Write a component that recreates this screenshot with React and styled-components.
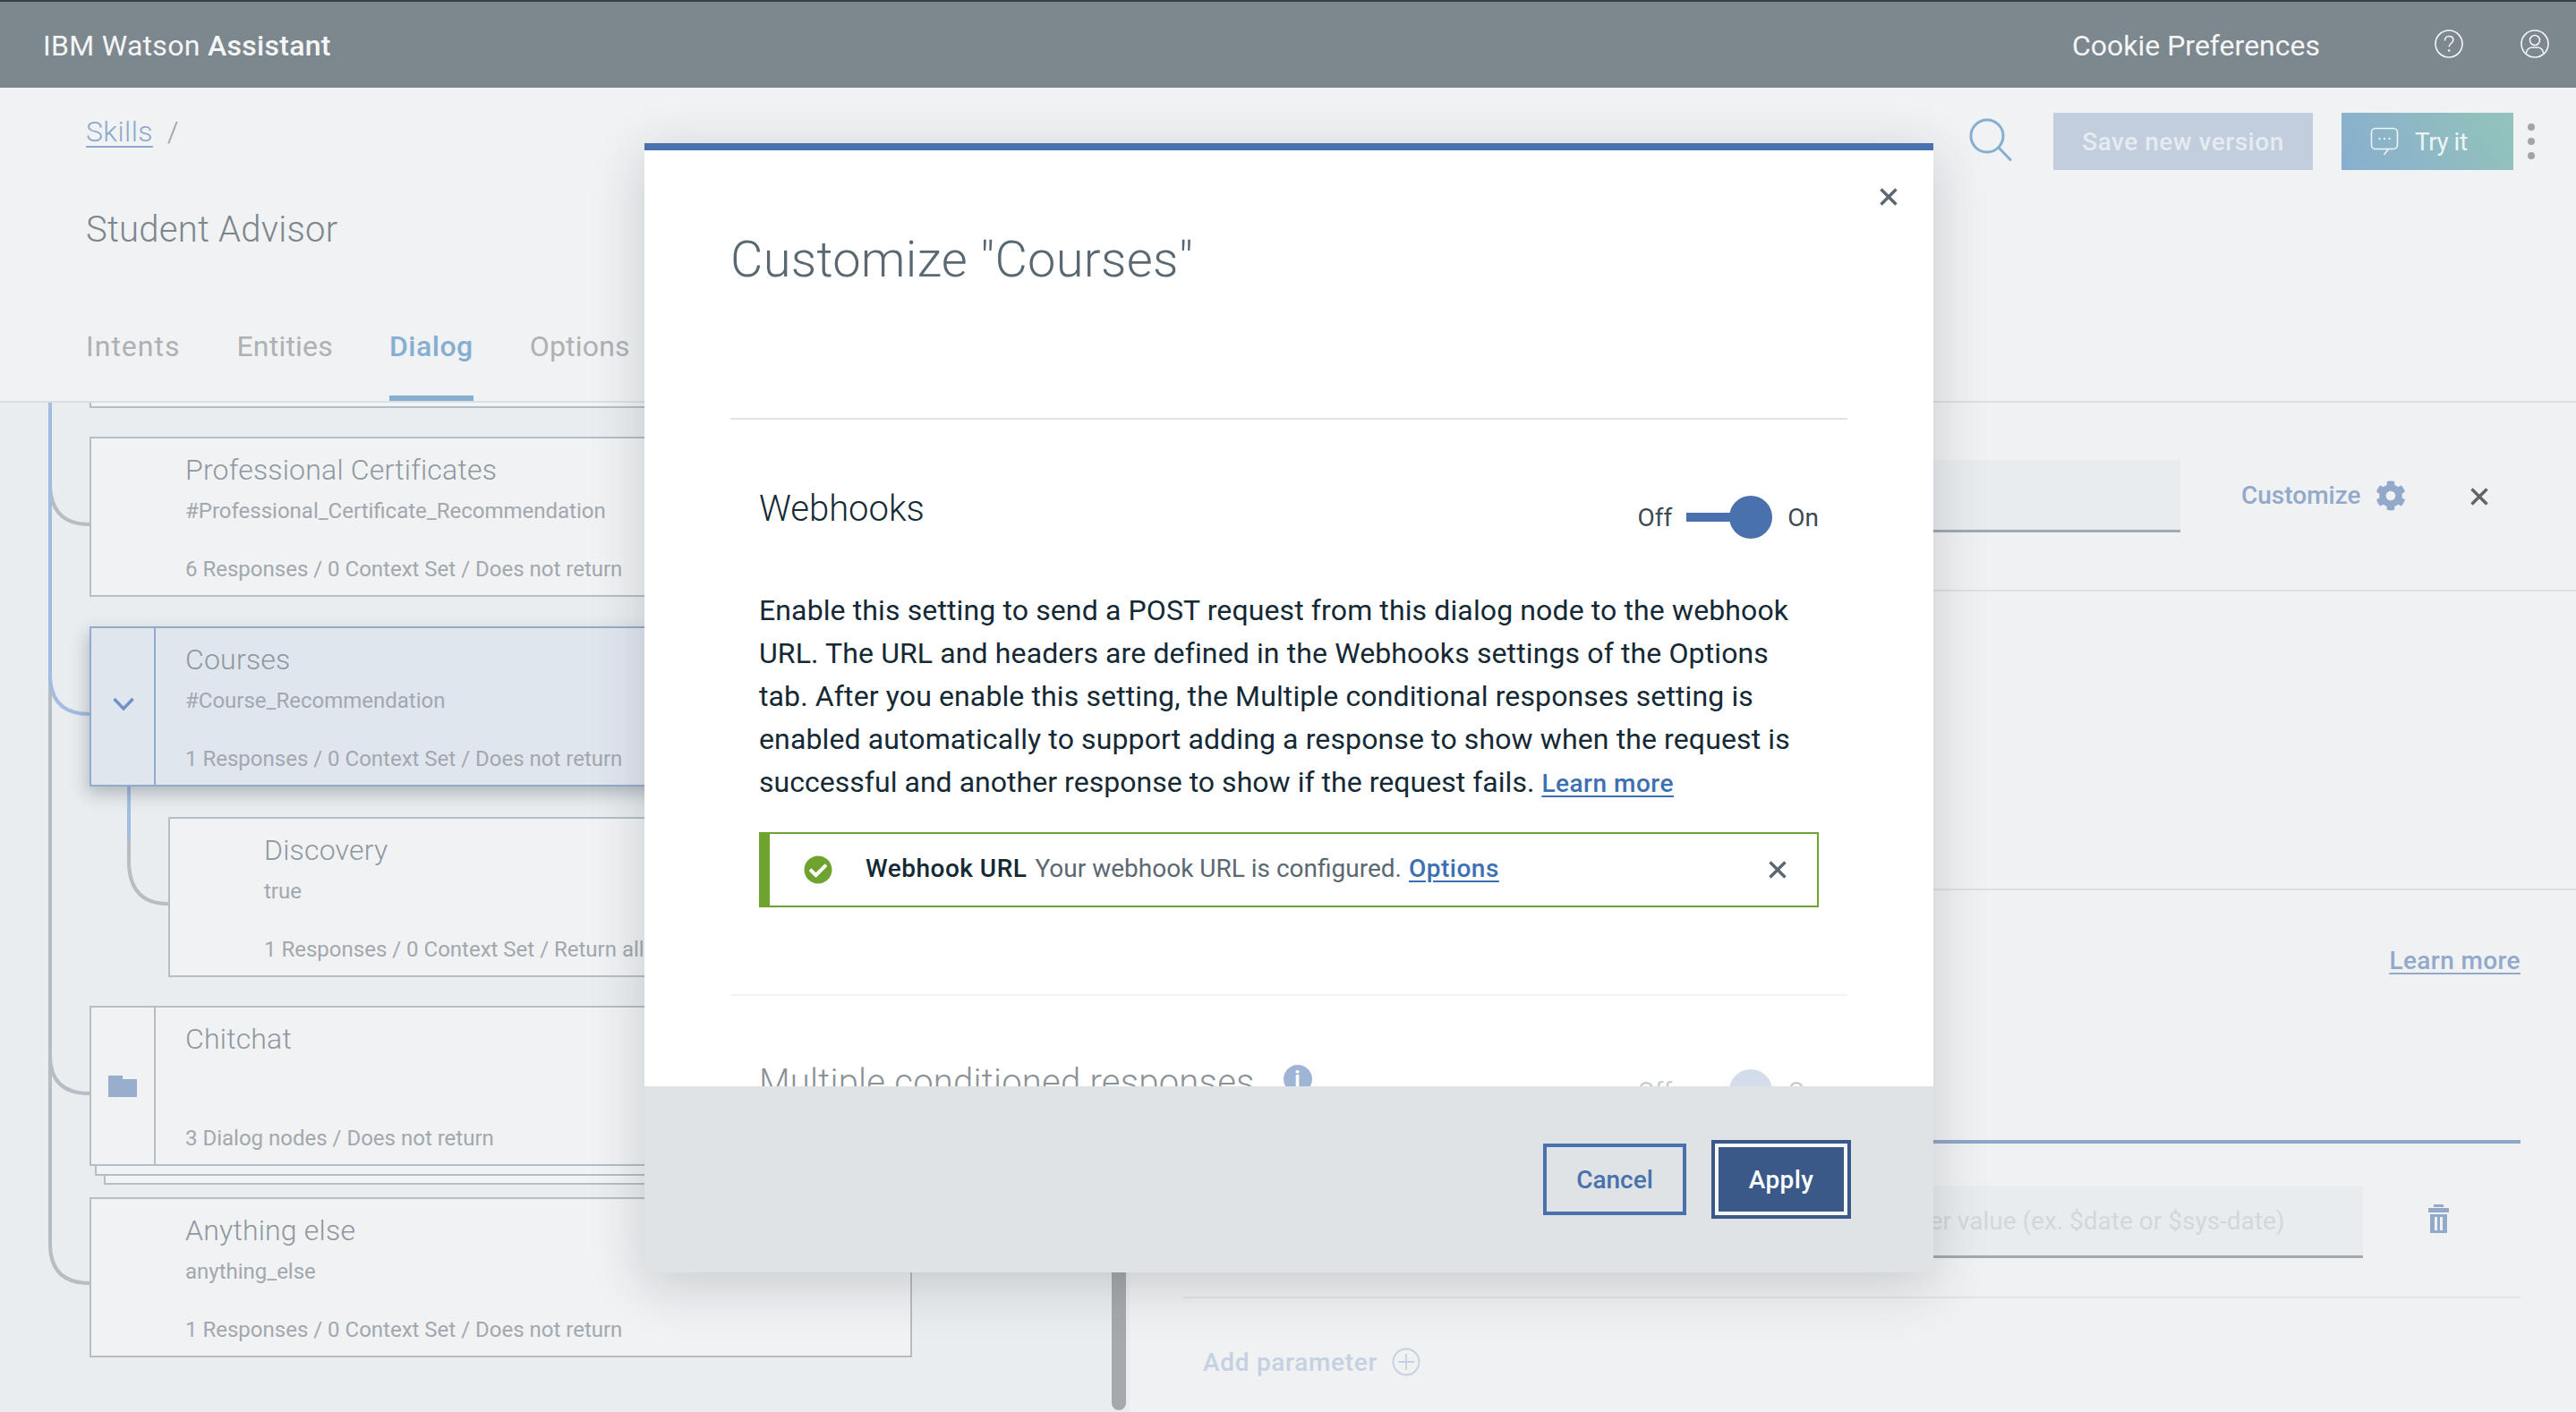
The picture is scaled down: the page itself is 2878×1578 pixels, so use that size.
import React from 'react';
import styled, { createGlobalStyle } from 'styled-components';
import { FaCog, FaCheckCircle } from 'react-icons/fa';

const FONT = `Roboto, "Noto Sans", Arial, sans-serif`;

const GlobalStyle = createGlobalStyle`
  html, body {
    margin: 0;
    padding: 0;
    background: #f0f2f4;
    font-family: ${FONT};
  }
  * {
    box-sizing: border-box;
  }
`;

const Page = styled.div`
  position: relative;
  width: 2878px;
  height: 1578px;
  overflow: hidden;
  background: #f0f2f4;
  display: flex;
  flex-direction: column;
`;

const TopBar = styled.header`
  height: 98px;
  flex-shrink: 0;
  background: #7d888e;
  border-top: 2px solid #3a4044;
  display: flex;
  align-items: center;
  justify-content: space-between;
  padding: 0 30px 2px 48px;
  color: #f4f6f7;
`;

const Brand = styled.div`
  font-size: 32px;
  letter-spacing: 0.3px;
  padding-top: 3px;
  strong {
    font-weight: 500;
  }
`;

const TopRight = styled.div`
  display: flex;
  align-items: center;
`;

const CookieLink = styled.span`
  font-size: 32px;
  margin-right: 128px;
  padding-top: 3px;
`;

const TopIcon = styled.svg`
  width: 32px;
  height: 32px;
  margin-left: ${(p) => p.$gap || 0}px;
  fill: none;
  stroke: #f4f6f7;
  stroke-width: 1.6;
`;

const SkillHeader = styled.section`
  height: 352px;
  flex-shrink: 0;
  display: flex;
  justify-content: space-between;
  border-bottom: 2px solid #dcdfe2;
  padding-left: 96px;
`;

const HeaderLeft = styled.div`
  display: flex;
  flex-direction: column;
`;

const Breadcrumb = styled.div`
  margin-top: 30px;
  height: 40px;
  display: flex;
  align-items: center;
  gap: 16px;
  font-size: 32px;
  font-weight: 300;
  letter-spacing: 0.4px;
  color: #9aa0a5;
  a {
    color: #8fa8cc;
    text-decoration: underline;
    text-underline-offset: 5px;
    text-decoration-thickness: 2px;
  }
`;

const SkillTitle = styled.h1`
  margin: 63px 0 0;
  height: 56px;
  line-height: 56px;
  font-size: 40px;
  font-weight: 300;
  letter-spacing: 0.25px;
  color: #7d868d;
`;

const Tabs = styled.nav`
  margin-top: 78px;
  display: flex;
  gap: 63px;
`;

const Tab = styled.div`
  height: 85px;
  line-height: 48px;
  font-size: 32px;
  letter-spacing: ${(p) => p.$spacing}px;
  font-weight: ${(p) => (p.$active ? 500 : 400)};
  color: ${(p) => (p.$active ? '#86aed1' : '#adb1b4')};
  border-bottom: 6px solid ${(p) => (p.$active ? '#86aed1' : 'transparent')};
`;

const HeaderActions = styled.div`
  display: flex;
  align-items: flex-start;
  padding: 28px 46px 0 0;
`;

const SearchIcon = styled.svg`
  width: 48px;
  height: 48px;
  margin: 6px 46px 0 0;
  fill: none;
  stroke: #86aed1;
  stroke-width: 3;
  stroke-linecap: round;
`;

const SaveButton = styled.div`
  width: 290px;
  height: 64px;
  background: #c2cede;
  color: #e6ebf1;
  font-size: 28px;
  font-weight: 500;
  letter-spacing: 0.5px;
  display: flex;
  align-items: center;
  justify-content: center;
  margin-right: 32px;
`;

const TryButton = styled.div`
  width: 192px;
  height: 64px;
  background: linear-gradient(60deg, #88aecf 0%, #93c4ba 100%);
  color: #eef3f5;
  font-size: 28px;
  letter-spacing: -0.5px;
  display: flex;
  align-items: center;
  padding-left: 32px;
  gap: 18px;
  margin-right: 16px;
  svg {
    width: 32px;
    height: 32px;
    fill: none;
    stroke: #eef3f5;
    stroke-width: 1.6;
  }
`;

const KebabDots = styled.div`
  height: 64px;
  display: flex;
  flex-direction: column;
  justify-content: center;
  gap: 8px;
  span {
    width: 8px;
    height: 8px;
    border-radius: 50%;
    background: #a0a5a9;
  }
`;

const Workspace = styled.main`
  flex: 1;
  display: flex;
  min-height: 0;
`;

const TreePane = styled.div`
  position: relative;
  width: 1262px;
  flex-shrink: 0;
  background: #e9edf0;
  padding-left: 100px;
  display: flex;
  flex-direction: column;
`;

const TreeLines = styled.svg`
  position: absolute;
  left: 0;
  top: 0;
  width: 200px;
  height: 1128px;
  fill: none;
  stroke-width: 4px;
`;

const Splitter = styled.div`
  position: absolute;
  left: 1242px;
  top: 0;
  bottom: 2px;
  width: 16px;
  background: #a5a9ac;
  border-radius: 0 0 8px 8px;
`;

const NodeStub = styled.div`
  width: 919px;
  height: 6px;
  border: 2px solid #b6bdc3;
  border-top: 0;
  background: #f0f2f4;
  margin-bottom: 32px;
`;

const Node = styled.div`
  position: relative;
  width: ${(p) => (p.$child ? 831 : 919)}px;
  margin-left: ${(p) => (p.$child ? 88 : 0)}px;
  margin-bottom: ${(p) => p.$gap ?? 33}px;
  height: 179px;
  display: flex;
  background: ${(p) => (p.$active ? '#e0e6ee' : '#f0f2f4')};
  border: 2px solid ${(p) => (p.$active ? '#93aac9' : '#b6bdc3')};
  box-shadow: ${(p) => (p.$active ? '-2px 8px 18px rgba(60, 70, 85, 0.32)' : 'none')};
`;

const NodeIcon = styled.div`
  width: 72px;
  flex-shrink: 0;
  display: flex;
  align-items: center;
  justify-content: center;
  border-right: 2px solid ${(p) => p.$line || 'transparent'};
`;

const Chevron = styled.svg`
  width: 24px;
  height: 16px;
  margin: -6px 0 0 2px;
  fill: none;
  stroke: #6f93c4;
  stroke-width: 3.5;
`;

const FolderIcon = styled.svg`
  width: 32px;
  height: 24px;
  fill: #98aecd;
`;

const NodeBody = styled.div`
  flex: 1;
  min-width: 0;
  display: flex;
  flex-direction: column;
  padding: 13px 0 11px 33px;
  white-space: nowrap;
  overflow: hidden;
`;

const NodeTitle = styled.div`
  font-size: 32px;
  font-weight: 300;
  letter-spacing: 0.2px;
  line-height: 44px;
  color: #8f979e;
`;

const NodeCondition = styled.div`
  margin-top: 6px;
  font-size: 24px;
  line-height: 36px;
  color: #a2a8ae;
`;

const NodeMeta = styled.div`
  margin-top: auto;
  font-size: 24px;
  line-height: 36px;
  color: #a2a8ae;
`;

const StackEdge = styled.div`
  width: ${(p) => 919 - p.$inset}px;
  margin-left: ${(p) => p.$inset}px;
  height: ${(p) => p.$height}px;
  background: #f0f2f4;
  border: 2px solid #b6bdc3;
  border-top: 0;
  margin-bottom: ${(p) => p.$gap || 0}px;
`;

const RightPane = styled.div`
  flex: 1;
  min-width: 0;
  display: flex;
  flex-direction: column;
  background: #f0f1f3;
`;

const FieldSection = styled.div`
  height: 211px;
  flex-shrink: 0;
  display: flex;
  align-items: flex-start;
  padding: 64px 0 0 60px;
  border-bottom: 2px solid #dee1e4;
`;

const Field = styled.div`
  width: ${(p) => p.$width}px;
  height: 81px;
  flex-shrink: 0;
  background: #e9ecef;
  border-bottom: 3px solid #a3a9ae;
  display: flex;
  align-items: center;
  padding-left: 16px;
  font-size: 28px;
  color: #d3d7da;
  white-space: nowrap;
  overflow: hidden;
`;

const CustomizeLink = styled.div`
  margin-left: 68px;
  height: 81px;
  padding-bottom: 2px;
  display: flex;
  align-items: center;
  gap: 16px;
  font-size: 28px;
  font-weight: 500;
  color: #93a9ca;
  svg {
    width: 34px;
    height: 34px;
  }
`;

const CloseGlyph = styled.svg`
  width: 20px;
  height: 20px;
  fill: none;
  stroke: ${(p) => p.$color || '#5a6872'};
  stroke-width: 3.4;
  flex-shrink: 0;
`;

const FieldClose = styled.div`
  height: 81px;
  margin-left: 72px;
  display: flex;
  align-items: center;
`;

const EmptySection = styled.div`
  height: 334px;
  flex-shrink: 0;
  border-bottom: 2px solid #dee1e4;
`;

const ParamSection = styled.div`
  flex: 1;
  padding: 0 62px 0 60px;
  display: flex;
  flex-direction: column;
`;

const LearnRow = styled.div`
  margin-top: 58px;
  height: 40px;
  display: flex;
  justify-content: flex-end;
  align-items: center;
  a {
    font-size: 28px;
    font-weight: 500;
    letter-spacing: 0.4px;
    color: #93a9ca;
    text-decoration: underline;
    text-underline-offset: 4px;
    text-decoration-thickness: 2px;
  }
`;

const ParamTabLine = styled.div`
  margin-top: 181px;
  height: 4px;
  background: #8fa6c6;
`;

const ParamRow = styled.div`
  margin-top: 47px;
  padding-bottom: 43px;
  border-bottom: 2px solid #e1e4e7;
  display: flex;
  align-items: center;
  gap: 40px;
`;

const TrashIcon = styled.svg`
  width: 23px;
  height: 32px;
  margin-left: 33px;
  margin-top: -8px;
  fill: #93a9ca;
`;

const AddParam = styled.div`
  margin-top: 51px;
  padding-left: 22px;
  height: 40px;
  display: flex;
  align-items: center;
  gap: 16px;
  font-size: 28px;
  font-weight: 500;
  letter-spacing: 0.7px;
  color: #c5d1e2;
  svg {
    width: 32px;
    height: 32px;
    fill: none;
    stroke: #c5d1e2;
    stroke-width: 1.8;
  }
`;

const Modal = styled.div`
  position: absolute;
  left: 720px;
  top: 160px;
  width: 1440px;
  height: 1262px;
  display: flex;
  flex-direction: column;
  background: #fff;
  border-top: 8px solid #4871ad;
  box-shadow: 0 14px 56px rgba(40, 50, 60, 0.2);
`;

const ModalBody = styled.div`
  position: relative;
  flex: 1;
  min-height: 0;
  overflow: hidden;
  padding: 90px 96px 0;
`;

const ModalClose = styled.div`
  position: absolute;
  right: 40px;
  top: 42px;
  display: flex;
`;

const ModalTitle = styled.h2`
  margin: 0;
  height: 64px;
  line-height: 64px;
  font-size: 56px;
  font-weight: 300;
  letter-spacing: 0.3px;
  color: #5a6872;
`;

const Rule = styled.hr`
  margin: ${(p) => p.$top}px 0 0;
  border: 0;
  height: 2px;
  background: ${(p) => p.$color || '#dfe3e6'};
`;

const Setting = styled.div`
  padding: 0 32px;
`;

const SettingHead = styled.div`
  margin-top: ${(p) => p.$top}px;
  display: flex;
  justify-content: space-between;
  align-items: flex-start;
`;

const SettingName = styled.div`
  display: flex;
  align-items: center;
  gap: 32px;
  height: 48px;
  font-size: 40px;
  font-weight: 300;
  letter-spacing: ${(p) => (p.$disabled ? 0.25 : 0)}px;
  color: ${(p) => (p.$disabled ? '#8a9298' : '#152935')};
`;

const InfoBadge = styled.span`
  width: 32px;
  height: 32px;
  border-radius: 50%;
  background: #9fb5d6;
  color: #fff;
  font-size: 24px;
  font-weight: 700;
  text-align: center;
  line-height: 32px;
  margin-top: -6px;
`;

const Toggle = styled.div`
  display: flex;
  align-items: center;
  font-size: 28px;
  color: ${(p) => (p.$disabled ? '#c8ccd0' : '#3d4a54')};
  margin-top: 10px;
`;

const ToggleTrack = styled.span`
  width: 51px;
  height: 10px;
  margin: 0 -3px 0 16px;
  background: ${(p) => (p.$disabled ? '#d3dceb' : '#4871ad')};
`;

const ToggleKnob = styled.span`
  width: 48px;
  height: 48px;
  border-radius: 50%;
  background: ${(p) => (p.$disabled ? '#d3dceb' : '#4871ad')};
  margin-right: 17px;
`;

const Paragraph = styled.p`
  margin: 56px 0 0;
  font-size: 32px;
  letter-spacing: 0.12px;
  line-height: 48px;
  color: #152935;
  white-space: nowrap;
  a {
    color: #3d70b2;
    font-size: 28px;
    font-weight: 500;
    letter-spacing: 0.5px;
    text-decoration: underline;
    text-underline-offset: 4px;
    text-decoration-thickness: 2px;
  }
`;

const LastLine = styled.span`
  letter-spacing: 0.03px;
`;

const Notice = styled.div`
  margin-top: 30px;
  height: 84px;
  display: flex;
  align-items: center;
  border: 2px solid #6ea32f;
  border-left-width: 12px;
  padding: 0 34px 0 38px;
  font-size: 28px;
  color: #5a6872;
  svg.check {
    width: 32px;
    height: 32px;
    color: #6ea32f;
    margin-right: 37px;
    flex-shrink: 0;
  }
  strong {
    font-weight: 500;
    letter-spacing: 0.5px;
    color: #152935;
    margin-right: 9px;
  }
  a {
    color: #3d70b2;
    font-weight: 500;
    letter-spacing: 0.5px;
    margin-left: 8px;
    text-decoration: underline;
    text-underline-offset: 4px;
    text-decoration-thickness: 2px;
  }
`;

const NoticeText = styled.div`
  flex: 1;
  padding-bottom: 3px;
  white-space: nowrap;
`;

const ModalFooter = styled.div`
  height: 208px;
  flex-shrink: 0;
  background: #dfe3e6;
  display: flex;
  justify-content: flex-end;
  align-items: center;
  gap: 28px;
  padding-right: 92px;
`;

const CancelButton = styled.div`
  width: 160px;
  height: 80px;
  border: 4px solid #4871ad;
  color: #4871ad;
  font-size: 28px;
  font-weight: 500;
  display: flex;
  align-items: center;
  justify-content: center;
`;

const ApplyButton = styled.div`
  width: 156px;
  height: 88px;
  background: #3a5888;
  border: 4px solid #3a5888;
  box-shadow: inset 0 0 0 4px #f4f6f8;
  color: #fff;
  font-size: 28px;
  font-weight: 500;
  letter-spacing: 0.4px;
  display: flex;
  align-items: center;
  justify-content: center;
`;

const Cross = ({ color }) => (
  <CloseGlyph $color={color} viewBox="0 0 20 20">
    <path d="M1.5 1.5l17 17M18.5 1.5l-17 17" />
  </CloseGlyph>
);

const App = () => (
  <Page>
    <GlobalStyle />
    <TopBar>
      <Brand>
        IBM Watson <strong>Assistant</strong>
      </Brand>
      <TopRight>
        <CookieLink>Cookie Preferences</CookieLink>
        <TopIcon viewBox="0 0 32 32">
          <circle cx="16" cy="16" r="15" />
          <path d="M11.5 12.5c0-3 2-5 4.7-5s4.600 1.800 4.600 4.300c0 3.700-4.600 3.700-4.600 7.400" />
          <circle cx="16.2" cy="23.5" r="1.3" fill="#f4f6f7" stroke="none" />
        </TopIcon>
        <TopIcon $gap={64} viewBox="0 0 32 32">
          <circle cx="16" cy="16" r="15" />
          <circle cx="16" cy="12" r="5.5" />
          <path d="M6.500 26.500c0-4.500 3.500-6.500 6.500-6.500h6c3 0 6.500 2 6.500 6.500" />
        </TopIcon>
      </TopRight>
    </TopBar>

    <SkillHeader>
      <HeaderLeft>
        <Breadcrumb>
          <a>Skills</a>
          <span>/</span>
        </Breadcrumb>
        <SkillTitle>Student Advisor</SkillTitle>
        <Tabs>
          <Tab $spacing={1}>Intents</Tab>
          <Tab $spacing={0.2}>Entities</Tab>
          <Tab $active $spacing={0.5}>Dialog</Tab>
          <Tab $spacing={0.2}>Options</Tab>
        </Tabs>
      </HeaderLeft>
      <HeaderActions>
        <SearchIcon viewBox="0 0 48 48">
          <circle cx="20" cy="20" r="18" />
          <path d="M33 33l13 13.500" />
        </SearchIcon>
        <SaveButton>Save new version</SaveButton>
        <TryButton>
          <svg viewBox="0 0 32 32">
            <path d="M20.500 24.500H26a4.500 4.500 0 0 0 4.500-4.500V6A4.500 4.500 0 0 0 26 1.500H6A4.500 4.500 0 0 0 1.500 6v14A4.500 4.500 0 0 0 6 24.500h14.500l-5 6.500" />
            <path d="M9.500 13h2M15 13h2M20.500 13h2" strokeWidth="2.2" />
          </svg>
          Try it
        </TryButton>
        <KebabDots>
          <span />
          <span />
          <span />
        </KebabDots>
      </HeaderActions>
    </SkillHeader>

    <Workspace>
      <TreePane>
        <TreeLines viewBox="0 0 200 1128">
          <path stroke="#b6bdc3" d="M56 0V940q0 44 44 44" />
          <path stroke="#b6bdc3" d="M56 90q0 46 44 46" />
          <path stroke="#b6bdc3" d="M56 730q0 42 44 42" />
          <path stroke="#a3bde0" d="M56 0V304q0 44 44 44" />
          <path stroke="#b6bdc3" d="M144 488v24q0 48 44 48" />
          <path stroke="#a3bde0" d="M144 429v59" />
        </TreeLines>
        <NodeStub />
        <Node $gap={33}>
          <NodeIcon />
          <NodeBody>
            <NodeTitle>Professional Certificates</NodeTitle>
            <NodeCondition>#Professional_Certificate_Recommendation</NodeCondition>
            <NodeMeta>6 Responses / 0 Context Set / Does not return</NodeMeta>
          </NodeBody>
        </Node>
        <Node $active $gap={34}>
          <NodeIcon $line="#93aac9">
            <Chevron viewBox="0 0 24 16">
              <path d="M1.500 2l10.500 11L22.500 2" />
            </Chevron>
          </NodeIcon>
          <NodeBody>
            <NodeTitle>Courses</NodeTitle>
            <NodeCondition>#Course_Recommendation</NodeCondition>
            <NodeMeta>1 Responses / 0 Context Set / Does not return</NodeMeta>
          </NodeBody>
        </Node>
        <Node $child $gap={32}>
          <NodeIcon />
          <NodeBody>
            <NodeTitle>Discovery</NodeTitle>
            <NodeCondition>true</NodeCondition>
            <NodeMeta>1 Responses / 0 Context Set / Return all</NodeMeta>
          </NodeBody>
        </Node>
        <Node $gap={0}>
          <NodeIcon $line="#b6bdc3">
            <FolderIcon viewBox="0 0 32 24">
              <path d="M0 0h16v4h16v20H0z" />
            </FolderIcon>
          </NodeIcon>
          <NodeBody>
            <NodeTitle>Chitchat</NodeTitle>
            <NodeMeta>3 Dialog nodes / Does not return</NodeMeta>
          </NodeBody>
        </Node>
        <StackEdge $inset={6} $height={11} />
        <StackEdge $inset={16} $height={10} $gap={14} />
        <Node $gap={0}>
          <NodeIcon />
          <NodeBody>
            <NodeTitle>Anything else</NodeTitle>
            <NodeCondition>anything_else</NodeCondition>
            <NodeMeta>1 Responses / 0 Context Set / Does not return</NodeMeta>
          </NodeBody>
        </Node>
        <Splitter />
      </TreePane>

      <RightPane>
        <FieldSection>
          <Field $width={1114} />
          <CustomizeLink>
            Customize
            <FaCog />
          </CustomizeLink>
          <FieldClose>
            <Cross color="#5f6468" />
          </FieldClose>
        </FieldSection>
        <EmptySection />
        <ParamSection>
          <LearnRow>
            <a>Learn more</a>
          </LearnRow>
          <ParamTabLine />
          <ParamRow>
            <Field $width={737} />
            <Field $width={541}>Enter value (ex. $date or $sys-date)</Field>
            <TrashIcon viewBox="0 0 23 32">
              <path d="M6 0h11v3H6zM0 4h23v5H0zM2 11h19v21H2zM7 14v15h3V14zM13 14v15h3V14z" fillRule="evenodd" />
            </TrashIcon>
          </ParamRow>
          <AddParam>
            Add parameter
            <svg viewBox="0 0 32 32">
              <circle cx="16" cy="16" r="14.5" />
              <path d="M16 7v18M7 16h18" />
            </svg>
          </AddParam>
        </ParamSection>
      </RightPane>
    </Workspace>

    <Modal>
      <ModalBody>
        <ModalClose>
          <Cross />
        </ModalClose>
        <ModalTitle>Customize "Courses"</ModalTitle>
        <Rule $top={145} />
        <Setting>
          <SettingHead $top={75}>
            <SettingName>Webhooks</SettingName>
            <Toggle>
              Off
              <ToggleTrack />
              <ToggleKnob />
              On
            </Toggle>
          </SettingHead>
          <Paragraph>
            Enable this setting to send a POST request from this dialog node to the webhook
            <br />
            URL. The URL and headers are defined in the Webhooks settings of the Options
            <br />
            tab. After you enable this setting, the Multiple conditional responses setting is
            <br />
            enabled automatically to support adding a response to show when the request is
            <br />
            <LastLine>successful and another response to show if the request fails. </LastLine>
            <a>Learn more</a>
          </Paragraph>
          <Notice>
            <FaCheckCircle className="check" />
            <NoticeText>
              <strong>Webhook URL</strong>
              Your webhook URL is configured.
              <a>Options</a>
            </NoticeText>
            <Cross />
          </Notice>
        </Setting>
        <Rule $top={97} $color="#f1f2f3" />
        <Setting>
          <SettingHead $top={72}>
            <SettingName $disabled>
              Multiple conditioned responses
              <InfoBadge>i</InfoBadge>
            </SettingName>
            <Toggle $disabled>
              Off
              <ToggleTrack $disabled />
              <ToggleKnob $disabled />
              On
            </Toggle>
          </SettingHead>
        </Setting>
      </ModalBody>
      <ModalFooter>
        <CancelButton>Cancel</CancelButton>
        <ApplyButton>Apply</ApplyButton>
      </ModalFooter>
    </Modal>
  </Page>
);

export default App;
